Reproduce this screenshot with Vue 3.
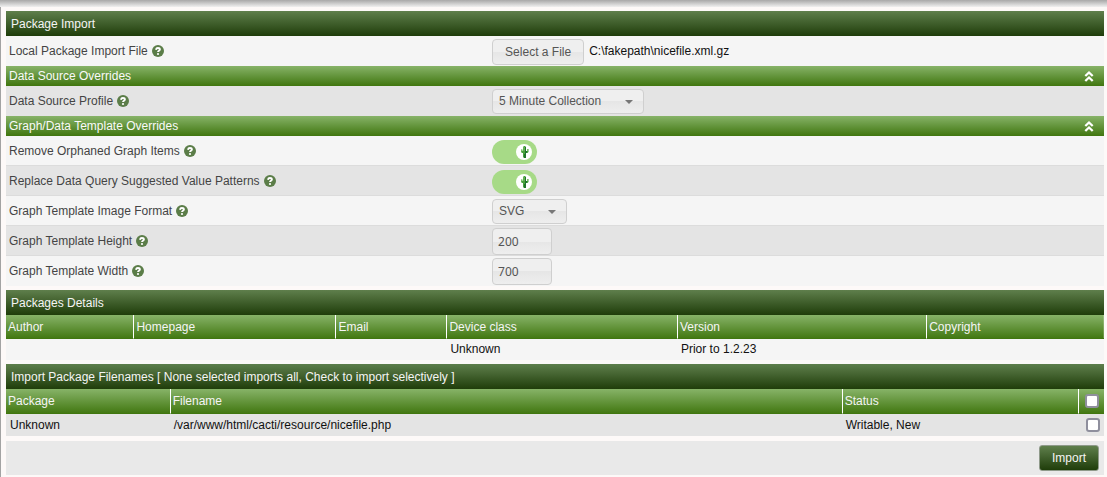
<script setup>
import { ref } from 'vue'

const profile = ref('5 Minute Collection')
const format = ref('SVG')
const checkAll = ref(false)
const checked = ref(false)

const groups = [
  {
    title: '',
    rows: [{ id: 'file', label: 'Local Package Import File', kind: 'file' }],
  },
  {
    title: 'Data Source Overrides',
    rows: [{ id: 'profile', label: 'Data Source Profile', kind: 'profile', shade: true }],
  },
  {
    title: 'Graph/Data Template Overrides',
    rows: [
      { id: 'orphans', label: 'Remove Orphaned Graph Items', kind: 'toggle' },
      { id: 'patterns', label: 'Replace Data Query Suggested Value Patterns', kind: 'toggle', shade: true },
      { id: 'format', label: 'Graph Template Image Format', kind: 'format' },
      { id: 'height', label: 'Graph Template Height', kind: 'text', value: '200', shade: true },
      { id: 'width', label: 'Graph Template Width', kind: 'text', value: '700' },
    ],
  },
]
</script>

<template>
  <div class="shell">
    <div class="topbar"></div>
    <main class="content">
      <form class="panel" @submit.prevent>
        <h2 class="title">Package Import</h2>
        <template v-for="group in groups" :key="group.title">
          <div v-if="group.title" class="section">
            <span>{{ group.title }}</span>
            <button type="button" class="collapse" :aria-label="'Collapse ' + group.title">
              <svg width="10" height="12" viewBox="0 0 10 12">
                <path d="M1.300 6 5 2.500 8.700 6M1.300 11 5 7.500 8.700 11" fill="none" stroke="#fff" stroke-width="2.300" />
              </svg>
            </button>
          </div>
          <div v-for="row in group.rows" :key="row.id" class="row" :class="{ shade: row.shade }">
            <div class="name">
              <label :for="row.id">{{ row.label }}</label>
              <svg class="help" width="12" height="12" viewBox="0 0 12 12" aria-hidden="true">
                <circle cx="6" cy="6" r="6" fill="#5b7d48" />
                <path d="M3.900 4.700C4.200 3.500 4.900 3 5.900 3c1.200 0 2 .600 2 1.500 0 1.300-1.900 1.200-1.900 2.600" fill="none" stroke="#fff" stroke-width="1.900" />
                <circle cx="6" cy="9" r="1.100" fill="#fff" />
              </svg>
            </div>
            <div class="value">
              <template v-if="row.kind === 'file'">
                <button :id="row.id" type="button" class="field pick">Select a File</button>
                <span class="path">C:\fakepath\nicefile.xml.gz</span>
              </template>
              <span v-else-if="row.kind === 'profile'" class="drop">
                <select :id="row.id" v-model="profile" class="field wide">
                  <option>5 Minute Collection</option>
                </select>
                <svg class="caret" width="8" height="4" viewBox="0 0 8 4"><path d="M0 0h8L4 4z" fill="#777" /></svg>
              </span>
              <span v-else-if="row.kind === 'format'" class="drop">
                <select :id="row.id" v-model="format" class="field narrow">
                  <option>SVG</option>
                </select>
                <svg class="caret" width="8" height="4" viewBox="0 0 8 4"><path d="M0 0h8L4 4z" fill="#777" /></svg>
              </span>
              <span v-else-if="row.kind === 'toggle'" class="switch">
                <input :id="row.id" type="checkbox" checked />
                <svg class="knob" width="16" height="16" viewBox="0 0 16 16">
                  <circle cx="8" cy="8" r="8" fill="#fff" />
                  <path d="M7 3l1-1h1l1 1v4h1V5h1.500v3l-1 1H10v4l-1 1H8l-1-1V9H6L5 8V5.500h1.500V7H7z" fill="#47a03c" />
                  <path d="M9 3h1v4h1v2h-1v5H8v-4h1z" fill="#20742a" />
                  <path d="M8 3v4M5.500 6v1.500M11.500 5v2" fill="none" stroke="#78c063" stroke-width="1" />
                </svg>
              </span>
              <input v-else :id="row.id" type="text" class="field number" :value="row.value" />
            </div>
          </div>
        </template>
      </form>

      <section class="panel details">
        <h2 class="title">Packages Details</h2>
        <table>
          <colgroup>
            <col class="author" /><col class="homepage" /><col class="email" />
            <col class="device" /><col class="version" /><col />
          </colgroup>
          <thead>
            <tr>
              <th>Author</th><th>Homepage</th><th>Email</th>
              <th>Device class</th><th>Version</th><th>Copyright</th>
            </tr>
          </thead>
          <tbody>
            <tr>
              <td></td><td></td><td></td><td>Unknown</td><td>Prior to 1.2.23</td><td></td>
            </tr>
          </tbody>
        </table>
      </section>

      <section class="panel files">
        <h2 class="title">Import Package Filenames [ None selected imports all, Check to import selectively ]</h2>
        <table>
          <colgroup>
            <col class="package" /><col class="filename" /><col /><col class="tick" />
          </colgroup>
          <thead>
            <tr>
              <th>Package</th><th>Filename</th><th>Status</th>
              <th class="box"><input v-model="checkAll" type="checkbox" aria-label="Select all files" /></th>
            </tr>
          </thead>
          <tbody>
            <tr>
              <td>Unknown</td><td>/var/www/html/cacti/resource/nicefile.php</td><td>Writable, New</td>
              <td class="box"><input v-model="checked" type="checkbox" aria-label="Select nicefile.php" /></td>
            </tr>
          </tbody>
        </table>
      </section>

      <div class="actions">
        <button type="button" class="import">Import</button>
      </div>
    </main>
  </div>
</template>

<style>
body {
  background: #fdf9f8;
}
</style>

<style scoped>
.shell {
  display: flex;
  flex-direction: column;
  min-height: 100vh;
  font: 12px/16px "Liberation Sans", Arial, sans-serif;
  color: #111;
}
.shell * {
  box-sizing: border-box;
}
.topbar {
  height: 7px;
  background: linear-gradient(#a8a8a8, #f0f0f0);
}
.content {
  flex: 1;
  padding: 4px 3px 2px 5px;
  border-left: 1px solid #a3a3a3;
}
.title {
  margin: 0;
  padding: 5px 5px 4px;
  font-size: 12px;
  font-weight: normal;
  line-height: 16px;
  color: #f5f5f5;
  background: linear-gradient(#5f7f4c, #1f3d0a);
}
.section {
  display: flex;
  align-items: center;
  justify-content: space-between;
  height: 20px;
  padding: 0 10px 0 3px;
  color: #fafafa;
  background: linear-gradient(#87b368, #40760f);
}
.collapse {
  display: flex;
  padding: 0;
  border: 0;
  background: none;
}
.row {
  display: flex;
  align-items: center;
  height: 30px;
  color: #444;
  background: #f5f5f5;
}
.row.shade {
  background: #e4e4e4;
}
.row:has(+ .row) {
  box-shadow: inset 0 -1px #dcdcdc;
}
.name {
  display: flex;
  align-items: center;
  gap: 4px;
  width: 44%;
  padding-left: 3px;
}
.value {
  display: flex;
  align-items: center;
  gap: 5px;
  padding-left: 3px;
}
.path {
  color: #111;
}
.field {
  height: 26px;
  margin: 0;
  border: 1px solid #cfcfcf;
  border-radius: 4px;
  font: 12px/16px "Liberation Sans", Arial, sans-serif;
  color: #555;
  background: linear-gradient(#efefef 50%, #e6e6e6 50%, #eeeeee);
}
.pick {
  margin-top: 2px;
  padding: 0 12px;
}
.drop {
  position: relative;
  display: flex;
}
.drop .field {
  appearance: none;
  height: 25px;
  padding: 0 6px;
}
.wide {
  width: 152px;
}
.narrow {
  width: 75px;
}
.caret {
  position: absolute;
  top: 11px;
  right: 11px;
  pointer-events: none;
}
.number {
  width: 60px;
  height: 27px;
  padding: 0 5px;
  font-family: "Noto Sans", sans-serif;
}
.switch {
  position: relative;
  display: flex;
  margin-top: 2px;
}
.switch input {
  appearance: none;
  width: 45px;
  height: 24px;
  margin: 0;
  border-radius: 12px;
  background: #a7da87;
}
.knob {
  position: absolute;
  top: 4px;
  right: 5px;
  pointer-events: none;
}
.details {
  margin-top: 4px;
}
.files {
  margin-top: 4px;
}
table {
  width: 100%;
  table-layout: fixed;
  border-spacing: 0;
}
thead tr {
  background: linear-gradient(#87b368, #40760f);
}
th {
  height: 24px;
  padding: 0 2px;
  border-right: 1px solid #fff;
  border-bottom: 1px solid #40760f;
  font-weight: normal;
  text-align: left;
  color: #f5f5f5;
}
th:last-child {
  border-right: 0;
}
.files th {
  height: 25px;
}
td {
  height: 21px;
  padding: 0 3px 1px;
  background: #f5f5f5;
}
td:first-child {
  padding-left: 4px;
}
.files td {
  height: 22px;
  padding-bottom: 0;
  background: #e4e4e4;
}
.author { width: 11.7%; }
.homepage { width: 18.4%; }
.email { width: 10.1%; }
.device { width: 21%; }
.version { width: 22.7%; }
.package { width: 15%; }
.filename { width: 61.2%; }
.tick { width: 25px; }
.box {
  padding: 0 4px 0 0;
  text-align: right;
}
.box input {
  appearance: none;
  display: block;
  width: 14px;
  height: 14px;
  margin: 0 0 0 auto;
  border: 2px solid #8f8f9d;
  border-radius: 3px;
  background: #fff;
}
th.box {
  padding-right: 5px;
}
.files td.box {
  padding-right: 4px;
}
.actions {
  display: flex;
  justify-content: flex-end;
  margin-top: 5px;
  padding: 4px 5px;
  background: #e9e9e9;
}
.import {
  height: 26px;
  padding: 0 12px;
  border: 1px solid #8f9a8a;
  border-radius: 3px;
  font: 12px/16px "Liberation Sans", Arial, sans-serif;
  color: #f5f5f5;
  background: linear-gradient(#5f7f4c, #1f3d0a);
}
</style>
